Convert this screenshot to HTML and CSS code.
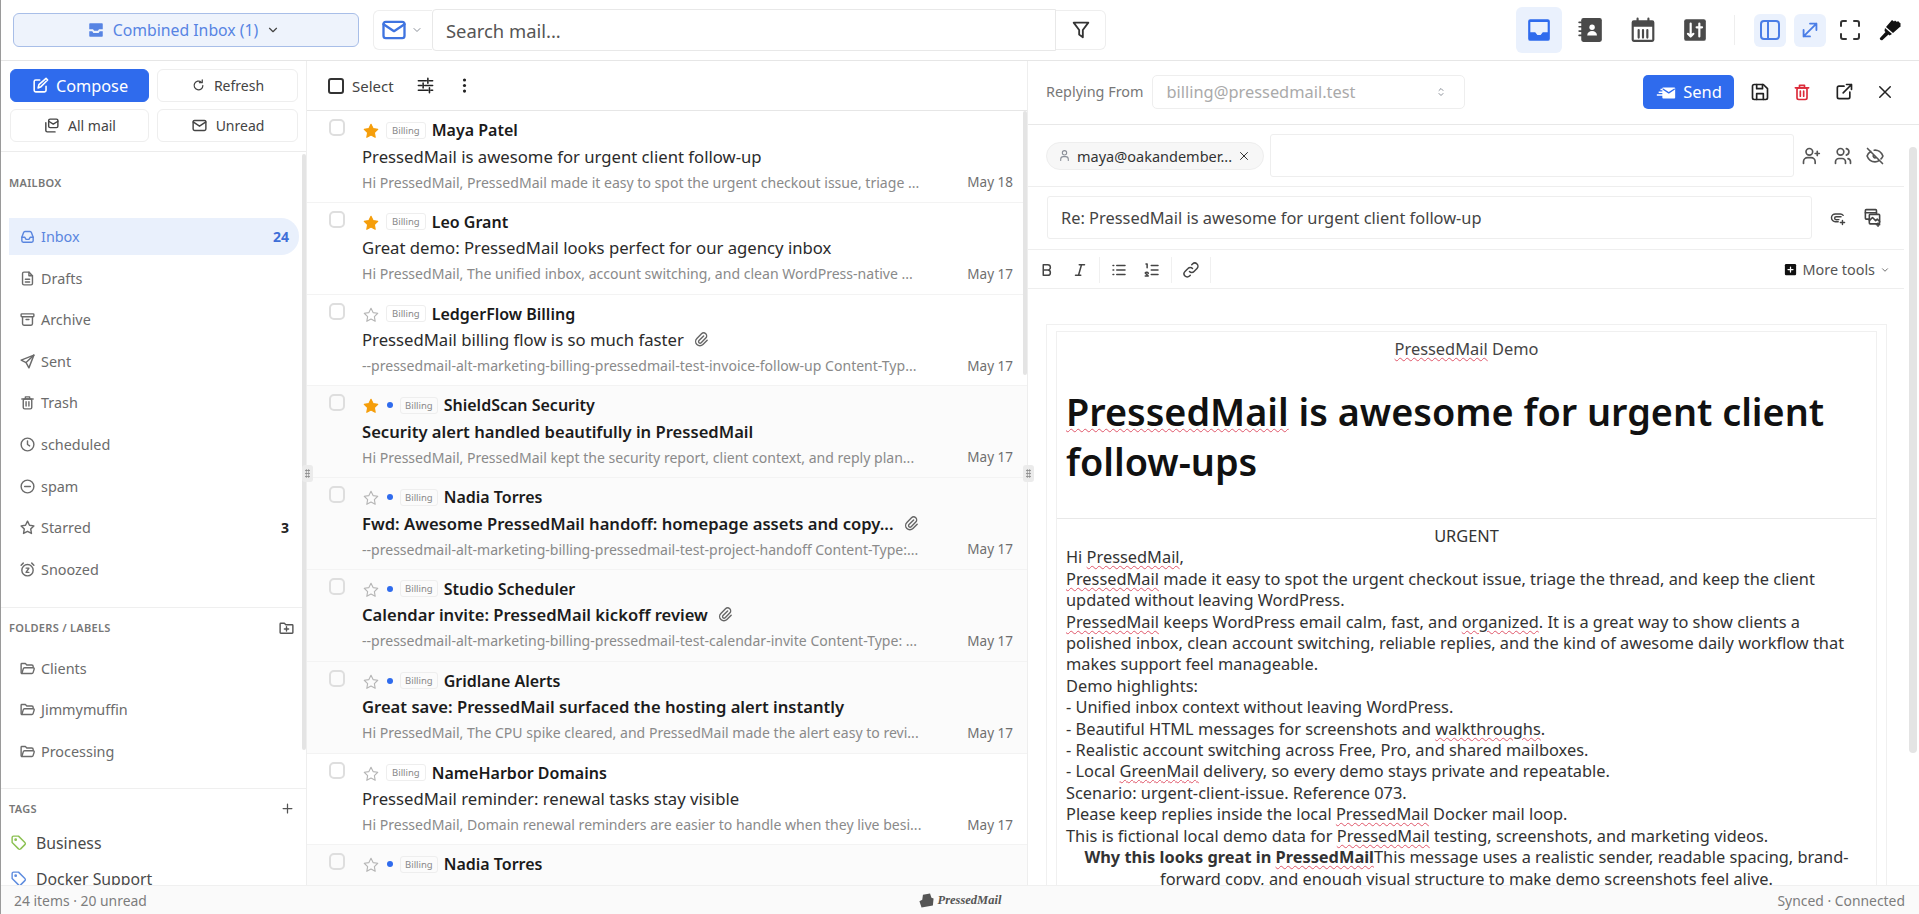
FILE: index.html
```html
<!DOCTYPE html>
<html lang="en">
<head>
  <meta charset="UTF-8" />
  <title>PressedMail</title>
  <link rel="stylesheet" href="styles.css">
</head>
<body>
  <svg class="sprite" xmlns="http://www.w3.org/2000/svg">
    <symbol id="i-chevron" viewBox="0 0 24 24"><path d="M6 9l6 6 6-6"/></symbol>
    <symbol id="i-stack" viewBox="0 0 24 24"><path class="solid" d="M4 3h16a1 1 0 0 1 1 1v7H16l-1.5 2h-5L8 11H3V4a1 1 0 0 1 1-1zM3 13.5h4L8.5 16h7l1.5-2.5h4V20a1 1 0 0 1-1 1H4a1 1 0 0 1-1-1z"/></symbol>
    <symbol id="i-mail" viewBox="0 0 24 24"><rect x="3" y="5" width="18" height="14" rx="2"/><path d="M3 7l9 6 9-6"/></symbol>
    <symbol id="i-funnel" viewBox="0 0 24 24"><path d="M4 4h16l-6 8v8l-4-3v-5z"/></symbol>
    <symbol id="i-edit" viewBox="0 0 24 24"><path d="M11 5H6a2 2 0 0 0-2 2v11a2 2 0 0 0 2 2h11a2 2 0 0 0 2-2v-5"/><path d="M9 15l1-4 9-8 2 2-9 9z"/></symbol>
    <symbol id="i-refresh" viewBox="0 0 24 24"><path d="M19 12a7 7 0 1 1-2.5-5.4"/><path d="M18 3v4.5h-4.5"/></symbol>
    <symbol id="i-allmail" viewBox="0 0 24 24"><rect x="8" y="3" width="13" height="12" rx="2"/><path d="M8 6l6.5 4L21 6"/><path d="M4 8v11a2 2 0 0 0 2 2h11"/></symbol>
    <symbol id="i-inbox" viewBox="0 0 24 24"><path d="M4 13l2.5-6.5A2 2 0 0 1 8.4 5h7.2a2 2 0 0 1 1.9 1.5L20 13v5a2 2 0 0 1-2 2H6a2 2 0 0 1-2-2z"/><path d="M4 13h4l2 3h4l2-3h4"/></symbol>
    <symbol id="i-file" viewBox="0 0 24 24"><path d="M14 3H7a2 2 0 0 0-2 2v14a2 2 0 0 0 2 2h10a2 2 0 0 0 2-2V8z"/><path d="M14 3v5h5M9 13h6M9 17h6"/></symbol>
    <symbol id="i-archive" viewBox="0 0 24 24"><rect x="3" y="4" width="18" height="4" rx="1"/><path d="M5 8v10a2 2 0 0 0 2 2h10a2 2 0 0 0 2-2V8M10 12h4"/></symbol>
    <symbol id="i-send" viewBox="0 0 24 24"><path d="M21 3L3 10l7 3.5L14 21z"/><path d="M10 13.5L21 3"/></symbol>
    <symbol id="i-trash" viewBox="0 0 24 24"><path d="M4 7h16M9 7V4h6v3"/><rect x="6" y="7" width="12" height="14" rx="2"/><path d="M10 11v6M14 11v6"/></symbol>
    <symbol id="i-clock" viewBox="0 0 24 24"><circle cx="12" cy="12" r="9"/><path d="M12 7v5l3 2"/></symbol>
    <symbol id="i-minus" viewBox="0 0 24 24"><circle cx="12" cy="12" r="9"/><path d="M8 12h8"/></symbol>
    <symbol id="i-star" viewBox="0 0 24 24"><path d="M12 3l2.8 5.8 6.2.9-4.5 4.4 1.1 6.3L12 17.4l-5.600 3 1.100-6.300L3 9.700l6.200-.9z"/></symbol>
    <symbol id="i-alarm" viewBox="0 0 24 24"><circle cx="12" cy="13" r="8"/><path d="M3 6l3-3M21 6l-3-3M10 10h4l-4 6h4"/></symbol>
    <symbol id="i-folder" viewBox="0 0 24 24"><path d="M4 19a1 1 0 0 1-1-1V6a1 1 0 0 1 1-1h5l2 2h7a2 2 0 0 1 2 2v1"/><path d="M4 19h14a2 2 0 0 0 2-1.500l1.500-5a1.500 1.500 0 0 0-1.500-1.500H8a2 2 0 0 0-2 1.500L4 19"/></symbol>
    <symbol id="i-folder-plus" viewBox="0 0 24 24"><path d="M3 7a1 1 0 0 1 1-1h5l2 2h9a1 1 0 0 1 1 1v10a1 1 0 0 1-1 1H4a1 1 0 0 1-1-1zM12 11v6M9 14h6"/></symbol>
    <symbol id="i-plus" viewBox="0 0 24 24"><path d="M12 5v14M5 12h14"/></symbol>
    <symbol id="i-tag" viewBox="0 0 24 24"><path d="M3 5a2 2 0 0 1 2-2h7l9 9a2 2 0 0 1 0 3l-6 6a2 2 0 0 1-3 0l-9-9z"/><circle cx="8" cy="8" r="1"/></symbol>
    <symbol id="i-sliders" viewBox="0 0 24 24"><path d="M3 6h10M17 6h4M15 3v6M3 12h4M11 12h10M9 9v6M3 18h12M19 18h2M17 15v6"/></symbol>
    <symbol id="i-dots" viewBox="0 0 24 24"><circle class="solid" cx="12" cy="5" r="2"/><circle class="solid" cx="12" cy="12" r="2"/><circle class="solid" cx="12" cy="19" r="2"/></symbol>
    <symbol id="i-clip" viewBox="0 0 24 24"><path d="M15 7l-6.500 6.500a2 2 0 0 0 3 3L18 10a4 4 0 0 0-6-6l-6.500 6.500a6 6 0 0 0 8.500 8.500L20 13"/></symbol>
    <symbol id="i-tray" viewBox="0 0 24 24"><path class="solid" d="M4 2h16a2 2 0 0 1 2 2v16a2 2 0 0 1-2 2H4a2 2 0 0 1-2-2V4a2 2 0 0 1 2-2zm0 2.500V14h4.500l2 2.500h3l2-2.500H20V4.500z" fill-rule="evenodd"/></symbol>
    <symbol id="i-contacts" viewBox="0 0 24 24"><path class="solid" d="M5 1h15a2 2 0 0 1 2 2v18a2 2 0 0 1-2 2H5a2 2 0 0 1-2-2V3a2 2 0 0 1 2-2z"/><circle cx="13" cy="9.500" r="2.500" fill="#fff" stroke="none"/><path d="M8.500 17c0-2.500 2-4 4.500-4s4.500 1.500 4.500 4z" fill="#fff" stroke="none"/><path d="M1 5h3M1 9h3M1 13h3M1 17h3" stroke-width="1.500"/></symbol>
    <symbol id="i-calendar" viewBox="0 0 24 24"><rect x="2.500" y="4" width="19" height="18" rx="1"/><path class="solid" d="M2 4h20v5H2z"/><path d="M7 1.500v4M17 1.500v4M8 12v7M12 12v7M16 12v7"/></symbol>
    <symbol id="i-board" viewBox="0 0 24 24"><rect class="solid" x="2" y="2" width="20" height="20" rx="2"/><path d="M8 6v12M5.500 15.500L8 18l2.500-2.500M16 18V6M13.500 9.500h5" stroke="#fff"/></symbol>
    <symbol id="i-panel" viewBox="0 0 24 24"><rect x="3" y="3" width="18" height="18" rx="3"/><path d="M10 3v18"/></symbol>
    <symbol id="i-expand" viewBox="0 0 24 24"><path d="M5 19L19 5M12 5h7v7M5 12v7h7"/></symbol>
    <symbol id="i-focus" viewBox="0 0 24 24"><path d="M3 8V5a2 2 0 0 1 2-2h3M16 3h3a2 2 0 0 1 2 2v3M21 16v3a2 2 0 0 1-2 2h-3M8 21H5a2 2 0 0 1-2-2v-3"/></symbol>
    <symbol id="i-brush" viewBox="0 0 24 24"><path class="solid" d="M14 2l2 1.500 1-1 2 1.500 1-1 3 3-1 1 1 1-8 7-7-6z"/><path class="solid" d="M7 10l7 6-2.500 1.500-1-1-6 5.500c-1 1-3.500-.5-2.500-2l5.500-6-1-1z"/></symbol>
    <symbol id="i-fastmail" viewBox="0 0 24 24"><path class="solid" d="M9 7h12a1 1 0 0 1 1 1v10a1 1 0 0 1-1 1H9a1 1 0 0 1-1-1v-2H2v-1.500h6V13H4v-1.500h4V10H6V8.500h2V8a1 1 0 0 1 1-1z"/><path d="M9 9l6 4 6-4" stroke="#2f6bed" stroke-width="1.500"/></symbol>
    <symbol id="i-save" viewBox="0 0 24 24"><path d="M5 3h11l5 5v11a2 2 0 0 1-2 2H5a2 2 0 0 1-2-2V5a2 2 0 0 1 2-2z"/><path d="M8 3v5h7V3M8 21v-7h8v7"/></symbol>
    <symbol id="i-external" viewBox="0 0 24 24"><path d="M12 5H6a2 2 0 0 0-2 2v11a2 2 0 0 0 2 2h11a2 2 0 0 0 2-2v-6M11 13L21 3M15 3h6v6"/></symbol>
    <symbol id="i-x" viewBox="0 0 24 24"><path d="M5 5l14 14M19 5L5 19"/></symbol>
    <symbol id="i-user" viewBox="0 0 24 24"><circle cx="12" cy="7" r="4"/><path d="M5 21v-2a5 5 0 0 1 5-5h4a5 5 0 0 1 5 5v2"/></symbol>
    <symbol id="i-useradd" viewBox="0 0 24 24"><circle cx="10" cy="7" r="4"/><path d="M3 21v-2a5 5 0 0 1 5-5h4a5 5 0 0 1 5 5v2M17 9h5M19.500 6.500v5"/></symbol>
    <symbol id="i-users" viewBox="0 0 24 24"><circle cx="9" cy="7" r="4"/><path d="M3 21v-2a4 4 0 0 1 4-4h4a4 4 0 0 1 4 4v2M16 3.100a4 4 0 0 1 0 7.800M21 21v-2a4 4 0 0 0-3-3.800"/></symbol>
    <symbol id="i-eyeoff" viewBox="0 0 24 24"><path d="M3 3l18 18M10.500 10.500a2 2 0 0 0 3 3M7 6.500C4.500 8 3 10.200 2.500 12c1.500 4 5.500 7 9.500 7 2 0 3.500-.5 5-1.500M11 5.100c4.500-.6 8.700 2.500 10.500 6.900-.5 1.300-1.300 2.500-2.300 3.500"/></symbol>
    <symbol id="i-clipadd" viewBox="0 0 24 24"><path d="M14 15l-4 .1a2 2 0 0 1 0-4.100l7-.1M20 9a5 5 0 0 0-4-2H9a5.500 5.500 0 0 0 0 11h4M19 16v6M16 19h6"/></symbol>
    <symbol id="i-imgadd" viewBox="0 0 24 24"><rect x="3" y="2" width="14" height="12" rx="1"/><path d="M3 6h14"/><rect x="8" y="8" width="13" height="12" rx="1" fill="#fff"/><path d="M8 16l4-4 4 4 2-2 3 3M19 19v4M17 21h4"/></symbol>
    <symbol id="i-bold" viewBox="0 0 24 24"><path d="M7 5h6a3.500 3.500 0 0 1 0 7H7zM13 12a3.500 3.500 0 0 1 0 7H7v-7"/></symbol>
    <symbol id="i-italic" viewBox="0 0 24 24"><path d="M11 5h7M6 19h7M14 5l-4 14"/></symbol>
    <symbol id="i-ul" viewBox="0 0 24 24"><path d="M9 6h11M9 12h11M9 18h11M4 6h1M4 12h1M4 18h1"/></symbol>
    <symbol id="i-ol" viewBox="0 0 24 24"><path d="M11 6h9M11 12h9M11 18h9M4 4h1.500v5M3 20h4l-4-4c1-1.500 4-1 4 .5"/></symbol>
    <symbol id="i-link" viewBox="0 0 24 24"><path d="M10 14a4 4 0 0 0 6 0l4-4a4 4 0 0 0-6-6l-1 1M14 10a4 4 0 0 0-6 0l-4 4a4 4 0 0 0 6 6l1-1"/></symbol>
    <symbol id="i-more" viewBox="0 0 24 24"><rect class="solid" x="3" y="3" width="18" height="18" rx="2"/><path d="M12 8v8M8 12h8" stroke="#fff"/></symbol>
    <symbol id="i-updown" viewBox="0 0 24 24"><path d="M8 9l4-4 4 4M8 15l4 4 4-4"/></symbol>
    <symbol id="i-logo" viewBox="0 0 24 24"><path class="solid" d="M7 4l10-2 2 6 3 1-1 10-16 3-3-9 4-2z"/></symbol>
  </svg>

  <div class="app">
    <header class="topbar">
      <button class="account"><svg class="icon ic-18"><use href="#i-stack"/></svg>Combined Inbox (1)<svg class="icon ic-14"><use href="#i-chevron"/></svg></button>
      <div class="sender"><svg class="icon ic-28"><use href="#i-mail"/></svg><svg class="icon ic-12 muted"><use href="#i-chevron"/></svg></div>
      <div class="search">Search mail...</div>
      <button class="filter"><svg class="icon ic-22"><use href="#i-funnel"/></svg></button>
      <nav class="workspace">
        <span class="ws ws-on"><svg class="icon ic-26"><use href="#i-tray"/></svg></span>
        <span class="ws"><svg class="icon ic-26"><use href="#i-contacts"/></svg></span>
        <span class="ws"><svg class="icon ic-26"><use href="#i-calendar"/></svg></span>
        <span class="ws"><svg class="icon ic-26"><use href="#i-board"/></svg></span>
      </nav>
      <span class="top-sep"></span>
      <div class="view-tools">
        <span class="vt vt-on"><svg class="icon ic-24"><use href="#i-panel"/></svg></span>
        <span class="vt vt-on"><svg class="icon ic-22"><use href="#i-expand"/></svg></span>
        <span class="vt"><svg class="icon ic-24"><use href="#i-focus"/></svg></span>
        <span class="vt"><svg class="icon ic-24"><use href="#i-brush"/></svg></span>
      </div>
    </header>

    <div class="main">
      <aside class="sidebar">
        <div class="actions">
          <button class="btn btn-primary"><svg class="icon ic-19"><use href="#i-edit"/></svg>Compose</button>
          <button class="btn"><svg class="icon ic-15"><use href="#i-refresh"/></svg>Refresh</button>
          <button class="btn"><svg class="icon ic-17"><use href="#i-allmail"/></svg>All mail</button>
          <button class="btn"><svg class="icon ic-17"><use href="#i-mail"/></svg>Unread</button>
        </div>
        <div class="nav">
          <div class="nav-title nav-title-first">MAILBOX</div>
          <a class="nav-item active"><svg class="icon ic-17"><use href="#i-inbox"/></svg>Inbox<b>24</b></a>
          <a class="nav-item"><svg class="icon ic-17"><use href="#i-file"/></svg>Drafts</a>
          <a class="nav-item"><svg class="icon ic-17"><use href="#i-archive"/></svg>Archive</a>
          <a class="nav-item"><svg class="icon ic-17"><use href="#i-send"/></svg>Sent</a>
          <a class="nav-item"><svg class="icon ic-17"><use href="#i-trash"/></svg>Trash</a>
          <a class="nav-item"><svg class="icon ic-17"><use href="#i-clock"/></svg>scheduled</a>
          <a class="nav-item"><svg class="icon ic-17"><use href="#i-minus"/></svg>spam</a>
          <a class="nav-item"><svg class="icon ic-17"><use href="#i-star"/></svg>Starred<b class="dark">3</b></a>
          <a class="nav-item"><svg class="icon ic-17"><use href="#i-alarm"/></svg>Snoozed</a>
          <div class="nav-section">
            <div class="nav-title">FOLDERS / LABELS<svg class="icon ic-17"><use href="#i-folder-plus"/></svg></div>
            <a class="nav-item"><svg class="icon ic-17"><use href="#i-folder"/></svg>Clients</a>
            <a class="nav-item"><svg class="icon ic-17"><use href="#i-folder"/></svg>Jimmymuffin</a>
            <a class="nav-item"><svg class="icon ic-17"><use href="#i-folder"/></svg>Processing</a>
          </div>
          <div class="nav-section nav-tags">
            <div class="nav-title">TAGS<svg class="icon ic-15"><use href="#i-plus"/></svg></div>
            <a class="tag-item"><svg class="icon ic-17 tag-green"><use href="#i-tag"/></svg>Business</a>
            <a class="tag-item"><svg class="icon ic-17 tag-blue"><use href="#i-tag"/></svg>Docker Support</a>
          </div>
          <span class="scroll-thumb"></span>
        </div>
      </aside>

      <section class="list-pane">
        <div class="list-head">
          <span class="select-box"></span><span class="select-label">Select</span>
          <svg class="icon ic-19"><use href="#i-sliders"/></svg>
          <svg class="icon ic-19"><use href="#i-dots"/></svg>
        </div>
        <ul class="rows">
          <li class="row">
            <span class="check"></span>
            <div class="row-main">
              <div class="row-top"><svg class="icon star star-on"><use href="#i-star"/></svg><span class="tag">Billing</span><span class="from">Maya Patel</span></div>
              <div class="subject">PressedMail is awesome for urgent client follow-up</div>
              <div class="row-foot"><span class="preview">Hi PressedMail, PressedMail made it easy to spot the urgent checkout issue, triage ...</span><span class="date">May 18</span></div>
            </div>
          </li>
          <li class="row">
            <span class="check"></span>
            <div class="row-main">
              <div class="row-top"><svg class="icon star star-on"><use href="#i-star"/></svg><span class="tag">Billing</span><span class="from">Leo Grant</span></div>
              <div class="subject">Great demo: PressedMail looks perfect for our agency inbox</div>
              <div class="row-foot"><span class="preview">Hi PressedMail, The unified inbox, account switching, and clean WordPress-native ...</span><span class="date">May 17</span></div>
            </div>
          </li>
          <li class="row">
            <span class="check"></span>
            <div class="row-main">
              <div class="row-top"><svg class="icon star"><use href="#i-star"/></svg><span class="tag">Billing</span><span class="from">LedgerFlow Billing</span></div>
              <div class="subject">PressedMail billing flow is so much faster<svg class="icon ic-17 clip"><use href="#i-clip"/></svg></div>
              <div class="row-foot"><span class="preview">--pressedmail-alt-marketing-billing-pressedmail-test-invoice-follow-up Content-Typ...</span><span class="date">May 17</span></div>
            </div>
          </li>
          <li class="row unread">
            <span class="check"></span>
            <div class="row-main">
              <div class="row-top"><svg class="icon star star-on"><use href="#i-star"/></svg><span class="dot"></span><span class="tag">Billing</span><span class="from">ShieldScan Security</span></div>
              <div class="subject">Security alert handled beautifully in PressedMail</div>
              <div class="row-foot"><span class="preview">Hi PressedMail, PressedMail kept the security report, client context, and reply plan...</span><span class="date">May 17</span></div>
            </div>
          </li>
          <li class="row unread">
            <span class="check"></span>
            <div class="row-main">
              <div class="row-top"><svg class="icon star"><use href="#i-star"/></svg><span class="dot"></span><span class="tag">Billing</span><span class="from">Nadia Torres</span></div>
              <div class="subject">Fwd: Awesome PressedMail handoff: homepage assets and copy...<svg class="icon ic-17 clip"><use href="#i-clip"/></svg></div>
              <div class="row-foot"><span class="preview">--pressedmail-alt-marketing-billing-pressedmail-test-project-handoff Content-Type:...</span><span class="date">May 17</span></div>
            </div>
          </li>
          <li class="row unread">
            <span class="check"></span>
            <div class="row-main">
              <div class="row-top"><svg class="icon star"><use href="#i-star"/></svg><span class="dot"></span><span class="tag">Billing</span><span class="from">Studio Scheduler</span></div>
              <div class="subject">Calendar invite: PressedMail kickoff review<svg class="icon ic-17 clip"><use href="#i-clip"/></svg></div>
              <div class="row-foot"><span class="preview">--pressedmail-alt-marketing-billing-pressedmail-test-calendar-invite Content-Type: ...</span><span class="date">May 17</span></div>
            </div>
          </li>
          <li class="row unread">
            <span class="check"></span>
            <div class="row-main">
              <div class="row-top"><svg class="icon star"><use href="#i-star"/></svg><span class="dot"></span><span class="tag">Billing</span><span class="from">Gridlane Alerts</span></div>
              <div class="subject">Great save: PressedMail surfaced the hosting alert instantly</div>
              <div class="row-foot"><span class="preview">Hi PressedMail, The CPU spike cleared, and PressedMail made the alert easy to revi...</span><span class="date">May 17</span></div>
            </div>
          </li>
          <li class="row">
            <span class="check"></span>
            <div class="row-main">
              <div class="row-top"><svg class="icon star"><use href="#i-star"/></svg><span class="tag">Billing</span><span class="from">NameHarbor Domains</span></div>
              <div class="subject">PressedMail reminder: renewal tasks stay visible</div>
              <div class="row-foot"><span class="preview">Hi PressedMail, Domain renewal reminders are easier to handle when they live besi...</span><span class="date">May 17</span></div>
            </div>
          </li>
          <li class="row unread">
            <span class="check"></span>
            <div class="row-main">
              <div class="row-top"><svg class="icon star"><use href="#i-star"/></svg><span class="dot"></span><span class="tag">Billing</span><span class="from">Nadia Torres</span></div>
            </div>
          </li>
        </ul>
        <span class="scroll-thumb"></span>
      </section>

      <section class="reply-pane">
        <span class="handle handle-left"></span>
        <span class="handle handle-mid"></span>
        <div class="reply-head">
          <span class="from-label">Replying From</span>
          <div class="from-select">billing@pressedmail.test<svg class="icon ic-12 muted"><use href="#i-updown"/></svg></div>
          <button class="btn-send"><svg class="icon ic-22"><use href="#i-fastmail"/></svg>Send</button>
          <svg class="icon ic-20 head-icon"><use href="#i-save"/></svg>
          <svg class="icon ic-20 head-icon red"><use href="#i-trash"/></svg>
          <svg class="icon ic-20 head-icon"><use href="#i-external"/></svg>
          <svg class="icon ic-18 head-icon"><use href="#i-x"/></svg>
        </div>
        <div class="reply-scroll">
          <div class="recipients">
            <span class="chip"><svg class="icon ic-13 muted"><use href="#i-user"/></svg>maya@oakandember...<svg class="icon ic-12"><use href="#i-x"/></svg></span>
            <div class="field field-to"></div>
            <div class="side-icons">
              <svg class="icon ic-20"><use href="#i-useradd"/></svg>
              <svg class="icon ic-20"><use href="#i-users"/></svg>
              <svg class="icon ic-20"><use href="#i-eyeoff"/></svg>
            </div>
          </div>
          <div class="subject-row">
            <div class="field field-subject">Re: PressedMail is awesome for urgent client follow-up</div>
            <svg class="icon ic-17"><use href="#i-clipadd"/></svg>
            <svg class="icon ic-19"><use href="#i-imgadd"/></svg>
          </div>
          <div class="toolbar">
            <svg class="icon ic-18 bold"><use href="#i-bold"/></svg>
            <svg class="icon ic-18"><use href="#i-italic"/></svg>
            <span class="tool-sep"></span>
            <svg class="icon ic-18"><use href="#i-ul"/></svg>
            <svg class="icon ic-18"><use href="#i-ol"/></svg>
            <span class="tool-sep"></span>
            <svg class="icon ic-18"><use href="#i-link"/></svg>
            <span class="tool-sep"></span>
            <span class="more-tools"><svg class="icon ic-15"><use href="#i-more"/></svg>More tools<svg class="icon ic-10"><use href="#i-chevron"/></svg></span>
          </div>
          <div class="message">
            <div class="message-card">
              <div class="message-banner">
                <div class="brand-line"><span class="sp">PressedMail</span> Demo</div>
                <h1><span class="sp">PressedMail</span> is awesome for urgent client<br>follow-ups</h1>
              </div>
              <div class="message-body">
                <div class="centered">URGENT</div>
                Hi <span class="sp">PressedMail</span>,<br>
                <span class="sp">PressedMail</span> made it easy to spot the urgent checkout issue, triage the thread, and keep the client<br>
                updated without leaving WordPress.<br>
                <span class="sp">PressedMail</span> keeps WordPress email calm, fast, and <span class="sp">organized</span>. It is a great way to show clients a<br>
                polished inbox, clean account switching, reliable replies, and the kind of awesome daily workflow that<br>
                makes support feel manageable.<br>
                Demo highlights:<br>
                - Unified inbox context without leaving WordPress.<br>
                - Beautiful HTML messages for screenshots and <span class="sp">walkthroughs</span>.<br>
                - Realistic account switching across Free, Pro, and shared mailboxes.<br>
                - Local <span class="sp">GreenMail</span> delivery, so every demo stays private and repeatable.<br>
                Scenario: urgent-client-issue. Reference 073.<br>
                Please keep replies inside the local <span class="sp">PressedMail</span> Docker mail loop.<br>
                This is fictional local demo data for <span class="sp">PressedMail</span> testing, screenshots, and marketing videos.
                <div class="centered"><b>Why this looks great in <span class="sp">PressedMail</span></b>This message uses a realistic sender, readable spacing, brand-<br>forward copy, and enough visual structure to make demo screenshots feel alive.</div>
              </div>
            </div>
          </div>
        </div>
        <span class="reply-thumb"></span>
      </section>
    </div>

    <footer class="statusbar">
      <span>24 items · 20 unread</span>
      <span class="logo"><svg class="icon ic-17"><use href="#i-logo"/></svg><i>PressedMail</i></span>
      <span class="status-right">Synced · Connected</span>
    </footer>
  </div>
</body>
</html>
```

FILE: styles.css
```css
* {
  box-sizing: border-box;
}
html, body {
  margin: 0;
  height: 100%;
  overflow: hidden;
}
body {
  font-family: "Noto Sans", Arial, sans-serif;
  font-size: 14px;
  color: #222;
  background: #fff;
}
.sprite {
  display: none;
}
button {
  font: inherit;
  cursor: pointer;
}

/* icons */
.icon {
  flex: none;
  fill: none;
  stroke: currentColor;
  stroke-width: 2;
  stroke-linecap: round;
  stroke-linejoin: round;
}
.solid {
  fill: currentColor;
  stroke: none;
}
.ic-10 { width: 10px; height: 10px; }
.ic-12 { width: 12px; height: 12px; }
.ic-13 { width: 13px; height: 13px; }
.ic-14 { width: 14px; height: 14px; }
.ic-15 { width: 15px; height: 15px; }
.ic-17 { width: 17px; height: 17px; }
.ic-18 { width: 18px; height: 18px; }
.ic-19 { width: 19px; height: 19px; }
.ic-20 { width: 20px; height: 20px; }
.ic-22 { width: 22px; height: 22px; }
.ic-24 { width: 24px; height: 24px; }
.ic-26 { width: 26px; height: 26px; }
.ic-28 { width: 28px; height: 28px; }
.muted { color: #8a8f98; }

.app {
  height: 914px;
  display: flex;
  flex-direction: column;
  border-left: 1px solid #9a9a9a;
}

/* top bar */
.topbar {
  height: 61px;
  flex: none;
  display: flex;
  align-items: center;
  padding-left: 12px;
  border-bottom: 1px solid #e6e6e6;
}
.account {
  width: 346px;
  height: 34px;
  display: flex;
  align-items: center;
  justify-content: center;
  gap: 8px;
  padding: 0 5px 0 0;
  color: #5784e3;
  font-size: 15.8px;
  background: #eef3fc;
  border: 1px solid #a8bee8;
  border-radius: 6px;
}
.account .ic-14 {
  color: #444;
}
.sender {
  width: 59px;
  height: 40px;
  margin-left: 14px;
  display: flex;
  align-items: center;
  gap: 3px;
  padding-left: 6px;
  color: #3f74e0;
  border: 1px solid #eee;
  border-right: none;
  border-radius: 6px 0 0 6px;
}
.search {
  width: 624px;
  height: 42px;
  display: flex;
  align-items: center;
  padding-left: 13px;
  font-size: 18.4px;
  color: #555;
  border: 1px solid #e8e8e8;
  border-radius: 4px 0 0 4px;
}
.filter {
  width: 50px;
  height: 40px;
  display: flex;
  align-items: center;
  justify-content: center;
  color: #333;
  background: #fff;
  border: 1px solid #eee;
  border-left: none;
  border-radius: 0 6px 6px 0;
}
.workspace {
  margin-left: auto;
  display: flex;
  align-items: center;
  gap: 6px;
}
.ws {
  width: 46px;
  height: 46px;
  display: flex;
  align-items: center;
  justify-content: center;
  color: #4a4a4a;
  border-radius: 6px;
}
.ws-on {
  color: #2f6bed;
  background: #eaf1fd;
}
.top-sep {
  width: 1px;
  height: 30px;
  margin: 0 19px 0 16px;
  background: #eee;
}
.view-tools {
  display: flex;
  align-items: center;
  gap: 8px;
  padding-right: 13px;
}
.vt {
  width: 32px;
  height: 33px;
  display: flex;
  align-items: center;
  justify-content: center;
  color: #333;
  border-radius: 6px;
}
.vt:last-child {
  color: #111;
}
.vt-on {
  color: #4a7de6;
  background: #eaf1fd;
}

.main {
  flex: 1;
  min-height: 0;
  display: flex;
}

/* left column */
.sidebar {
  width: 305px;
  flex: none;
  display: flex;
  flex-direction: column;
}
.actions {
  display: grid;
  grid-template-columns: 139px 141px;
  grid-auto-rows: 33px;
  gap: 7px 8px;
  height: 91px;
  padding: 8px 9px 0;
  border-bottom: 1px solid #ececec;
}
.btn {
  display: flex;
  align-items: center;
  justify-content: center;
  gap: 8px;
  color: #444;
  font-size: 14px;
  background: #fff;
  border: 1px solid #eee;
  border-radius: 6px;
}
.btn-primary {
  gap: 6px;
  color: #fff;
  font-size: 16.3px;
  background: #2f6bed;
  border-color: #2f6bed;
}
.nav {
  position: relative;
  flex: 1;
  min-height: 0;
  overflow: hidden;
}
.nav-title {
  height: 20px;
  display: flex;
  align-items: center;
  justify-content: space-between;
  padding: 0 11px 0 8px;
  font-size: 11px;
  font-weight: 600;
  letter-spacing: .3px;
  color: #777;
}
.nav-title svg {
  color: #555;
}
.nav-title-first {
  margin: 20px 0 26px;
}
.nav-item {
  height: 37px;
  margin: 0 7px 4.6px 8px;
  display: flex;
  align-items: center;
  gap: 5px;
  padding: 0 10px 0 10px;
  color: #6b6b6b;
  font-size: 14.4px;
  border-radius: 0 18px 18px 0;
}
.nav-item b {
  margin-left: auto;
  font-size: 14px;
  color: #3f6fd8;
}
.nav-item b.dark {
  color: #222;
}
.nav-item.active {
  color: #5a86df;
  background: #e9f0fc;
}
.nav-section {
  margin-top: 19px;
  padding-top: 10px;
  border-top: 1px solid #efefef;
}
.nav-section .nav-title {
  margin-bottom: 12px;
}
.nav-tags {
  margin-top: 18px;
}
.nav-tags .nav-title {
  margin-bottom: 6px;
}
.tag-item {
  height: 36px;
  display: flex;
  align-items: center;
  gap: 9px;
  padding-left: 9px;
  color: #4a4a4a;
  font-size: 15.8px;
}
.tag-green { color: #8cc152; }
.tag-blue { color: #5f8ddf; }
.scroll-thumb {
  position: absolute;
  top: 2px;
  right: 0;
  width: 4px;
  height: 596px;
  background: #e4e4e4;
  border-radius: 2px;
}

/* message list */
.list-pane {
  position: relative;
  width: 721px;
  flex: none;
  border-left: 1px solid #eee;
  overflow: hidden;
}
.list-head {
  height: 50px;
  display: flex;
  align-items: center;
  padding-left: 21px;
  border-bottom: 1px solid #e6e6e6;
}
.select-box {
  width: 16px;
  height: 16px;
  border: 2px solid #333;
  border-radius: 3px;
}
.select-label {
  margin: 0 22px 0 8px;
  font-size: 15px;
  color: #444;
}
.list-head .ic-19:last-child {
  margin-left: 20px;
}
.rows {
  margin: 0;
  padding: 0;
  list-style: none;
}
.row {
  height: 91.8px;
  display: flex;
  padding: 7px 14px 0 22px;
  border-bottom: 1px solid #f3f3f3;
}
.row.unread {
  background: #fbfbfb;
}
.check {
  width: 16px;
  height: 17px;
  flex: none;
  margin-top: 1px;
  border: 2px solid #dedede;
  border-radius: 5px;
}
.row-main {
  flex: 1;
  min-width: 0;
  margin-left: 17px;
}
.row-top {
  height: 24px;
  display: flex;
  align-items: center;
}
.star {
  width: 18px;
  height: 18px;
  margin-top: 2px;
  color: #b5b5b5;
  stroke-width: 1.5;
}
.star-on {
  color: #f59e0b;
  fill: #f59e0b;
}
.dot {
  width: 6px;
  height: 6px;
  margin-left: 7px;
  border-radius: 50%;
  background: #2f6bed;
}
.tag {
  height: 17px;
  margin-left: 6px;
  padding: 0 5px;
  display: flex;
  align-items: center;
  font-size: 9.5px;
  color: #888;
  border: 1px solid #eee;
  border-radius: 3px;
}
.unread .tag {
  margin-left: 7px;
  padding: 0 4px;
}
.from {
  margin-left: 6px;
  font-size: 16px;
  font-weight: 600;
  color: #1a1a1a;
}
.subject {
  height: 26px;
  margin-top: 1px;
  display: flex;
  align-items: center;
  font-size: 16.7px;
  color: #2b2b2b;
  white-space: nowrap;
}
.unread .subject {
  font-size: 16.6px;
  font-weight: 600;
  color: #1c1c1c;
}
.clip {
  margin-left: 9px;
  color: #666;
}
.row-foot {
  height: 22px;
  margin-top: 2px;
  display: flex;
  align-items: center;
  justify-content: space-between;
}
.preview {
  font-size: 14.05px;
  color: #8a8a8a;
  white-space: nowrap;
}
.date {
  font-size: 13.5px;
  color: #6f6f6f;
}
.list-pane > .scroll-thumb {
  top: 50px;
  right: 0;
  height: 264px;
  width: 4px;
}

/* reply pane */
.reply-pane {
  position: relative;
  flex: 1;
  min-width: 0;
  border-left: 1px solid #eee;
}
.handle {
  position: absolute;
  z-index: 2;
  top: 404px;
  width: 11px;
  height: 17px;
  padding: 4px 3px;
  background:
    radial-gradient(#8c8c8c .8px, transparent 1px) 0 0 / 2.5px 3px content-box,
    #ebebeb;
  border-radius: 3px;
}
.handle-left {
  left: -726px;
}
.handle-mid {
  left: -5px;
}
.reply-head {
  height: 64px;
  display: flex;
  align-items: center;
  padding: 0 25px 2px 18px;
  border-bottom: 1px solid #e8e8e8;
}
.from-label {
  font-size: 14.4px;
  color: #777;
}
.from-select {
  width: 313px;
  height: 34px;
  margin-left: 9px;
  display: flex;
  align-items: center;
  justify-content: space-between;
  padding: 0 17px 0 13px;
  font-size: 16.4px;
  color: #aaa;
  border: 1px solid #eee;
  border-radius: 5px;
}
.btn-send {
  height: 34px;
  width: 91px;
  margin-left: auto;
  display: flex;
  align-items: center;
  justify-content: center;
  gap: 6px;
  color: #fff;
  font-size: 16.5px;
  background: #2f6bed;
  border: none;
  border-radius: 5px;
}
.head-icon {
  margin-left: 22px;
  color: #222;
}
.btn-send + .head-icon {
  margin-left: 16px;
}
.head-icon.red {
  color: #dc2b3a;
}
.reply-scroll {
  width: 876px;
  height: 760px;
  overflow: hidden;
}
.recipients {
  height: 62px;
  display: flex;
  align-items: center;
  padding-left: 18px;
  border-bottom: 1px solid #eee;
}
.chip {
  width: 218px;
  height: 28px;
  display: flex;
  align-items: center;
  gap: 6px;
  padding: 0 9px 0 11px;
  font-size: 14.5px;
  color: #333;
  background: #f7f7f7;
  border: 1px solid #eee;
  border-radius: 14px;
  white-space: nowrap;
}
.field {
  display: flex;
  align-items: center;
  background: #fff;
  border: 1px solid #eee;
  border-radius: 3px;
}
.field-to {
  width: 524px;
  height: 43px;
  margin-left: 6px;
}
.side-icons {
  display: flex;
  gap: 12px;
  margin-left: 7px;
  color: #555;
}
.subject-row {
  height: 63px;
  display: flex;
  align-items: center;
  padding: 0 0 1px 19px;
  gap: 17px;
  color: #444;
  border-bottom: 1px solid #eee;
}
.field-subject {
  width: 765px;
  height: 43px;
  padding-left: 13px;
  font-size: 16.4px;
  color: #444;
}
.toolbar {
  height: 39px;
  display: flex;
  align-items: center;
  gap: 15px;
  padding: 1px 0 0 10px;
  color: #444;
  border-bottom: 1px solid #eee;
}
.tool-sep {
  width: 1px;
  height: 26px;
  margin: 0 -5px;
  background: #f0f0f0;
}
.more-tools {
  margin-left: auto;
  margin-right: 14px;
  display: flex;
  align-items: center;
  gap: 5px;
  font-size: 14.4px;
  color: #555;
}
.more-tools .ic-15 {
  color: #111;
}
.message {
  margin: 35px 0 0 18px;
  width: 841px;
  padding: 6px 9px 0;
  border: 1px solid #f0f0f0;
  border-bottom: none;
}
.message-card {
  border: 1px solid #f0f0f0;
  border-bottom: none;
}
.message-banner {
  height: 187px;
  padding: 6px 9px 0;
  border-bottom: 1px solid #e8e8e8;
}
.brand-line {
  text-align: center;
  font-size: 16.4px;
  line-height: 22px;
  color: #444;
}
h1 {
  margin: 27px 0 0;
  font-size: 37.8px;
  line-height: 50px;
  font-weight: 600;
  color: #111;
  white-space: nowrap;
}
.message-body {
  padding: 7px 9px 0;
  font-size: 16.36px;
  line-height: 21.4px;
  color: #333;
  white-space: nowrap;
}
.centered {
  text-align: center;
}
.sp {
  text-decoration: underline wavy #e0566a 1px;
  text-underline-offset: 2px;
}
.reply-thumb {
  position: absolute;
  top: 86px;
  right: 2px;
  width: 8px;
  height: 606px;
  background: #e4e4e4;
  border-radius: 4px;
}

/* status bar */
.statusbar {
  height: 29px;
  flex: none;
  position: relative;
  z-index: 3;
  display: grid;
  grid-template-columns: 1fr auto 1fr;
  align-items: center;
  padding: 0 14px 0 13px;
  margin-top: -1px;
  font-size: 13.9px;
  color: #7d7d7d;
  background: #fafafa;
  border-top: 1px solid #f0f0f0;
}
.logo {
  display: flex;
  align-items: center;
  gap: 3px;
  color: #555;
}
.logo i {
  font-family: "Liberation Serif", serif;
  font-size: 12.5px;
  font-weight: 700;
}
.status-right {
  text-align: right;
}
```
